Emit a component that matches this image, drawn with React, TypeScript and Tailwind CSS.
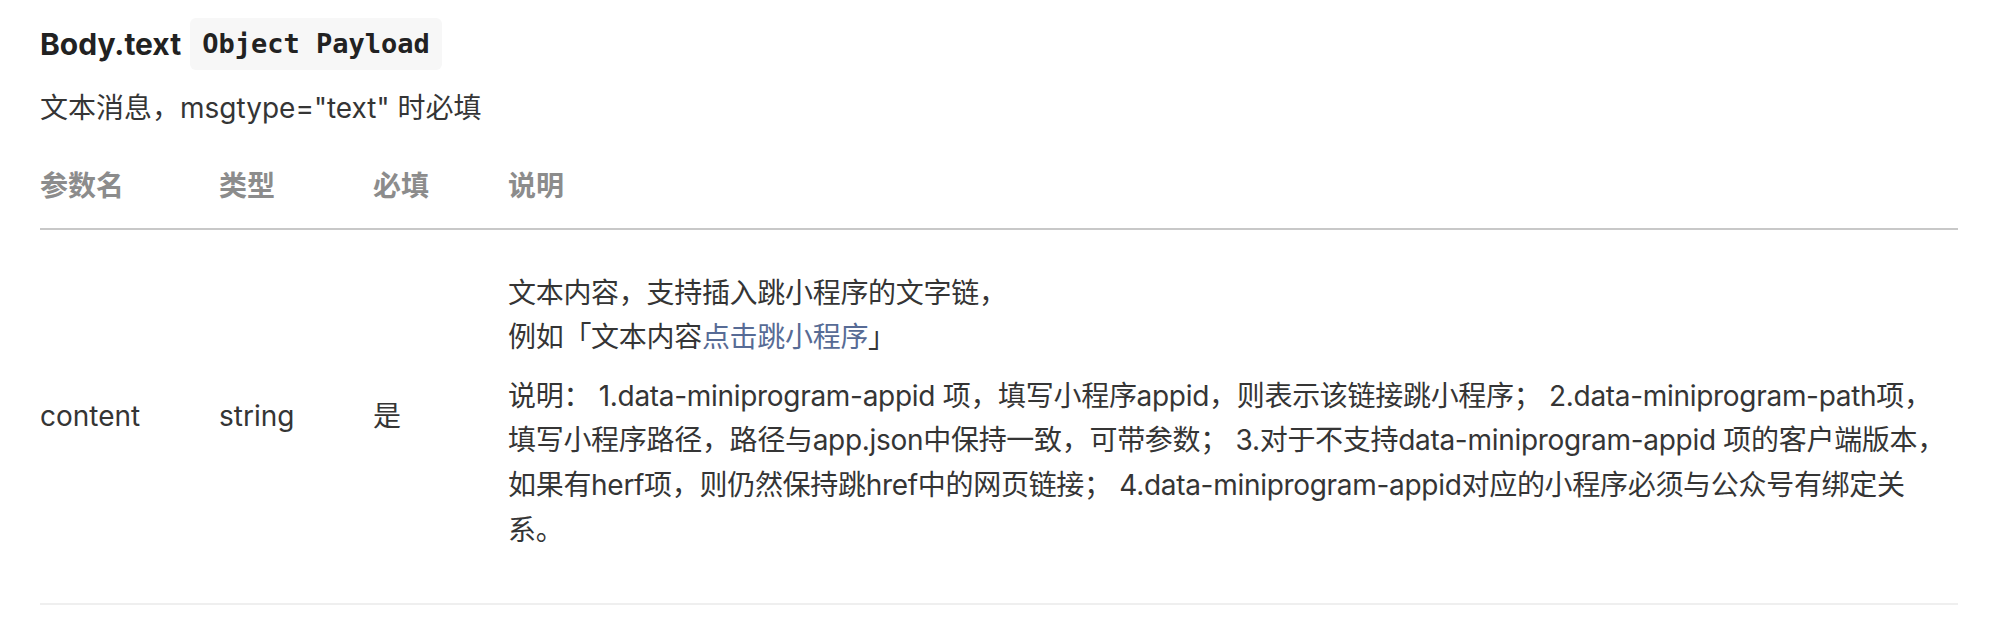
export default function App() {
  return (
    <div className="min-h-screen bg-white px-[40px] pt-[18px] text-[#353535] [font-family:Inter,'Noto_Sans_CJK_SC',sans-serif]">
      <h3 className="flex h-[52px] items-center text-[30px] font-bold text-[#222]">
        <span>Body.text</span>
        <code className="ml-[9px] flex h-[52px] items-center rounded-[6px] bg-[#f7f7f7] px-[12px] text-[27px] font-bold text-[#222] [font-family:'DejaVu_Sans_Mono',monospace]">
          Object Payload
        </code>
      </h3>
      <p className="mt-[16px] text-[28px] leading-[44px]">文本消息，msgtype="text" 时必填</p>

      <table className="mt-[15px] w-full table-fixed border-collapse text-[28px] leading-[44.6px]">
        <colgroup>
          <col className="w-[179px]" />
          <col className="w-[154px]" />
          <col className="w-[135px]" />
          <col />
        </colgroup>
        <thead>
          <tr className="border-b-2 border-[#c8c8c8] text-left text-[#8c8c8c]">
            <th className="pb-[19px] pt-[19px] font-semibold">参数名</th>
            <th className="pb-[19px] pt-[19px] font-semibold">类型</th>
            <th className="pb-[19px] pt-[19px] font-semibold">必填</th>
            <th className="pb-[19px] pt-[19px] font-semibold">说明</th>
          </tr>
        </thead>
        <tbody>
          <tr className="border-b-2 border-[#efefef]">
            <td className="align-middle">content</td>
            <td className="align-middle">string</td>
            <td className="align-middle">是</td>
            <td className="pb-[37px] pt-[41px] align-middle tracking-[-0.3px]">
              <p className="mb-[14px]">
                文本内容，支持插入跳小程序的文字链，
                <br />
                例如「文本内容<a className="text-[#576b95]">点击跳小程序</a>」
              </p>
              <p className="mb-[14px]">
                说明： 1.data-miniprogram-appid 项，填写小程序appid，则表示该链接跳小程序； 2.data-miniprogram-path项，填写小程序路径，路径与app.json中保持一致，可带参数； 3.对于不支持data-miniprogram-appid 项的客户端版本，如果有herf项，则仍然保持跳href中的网页链接； 4.data-miniprogram-appid对应的小程序必须与公众号有绑定关系。
              </p>
            </td>
          </tr>
        </tbody>
      </table>
    </div>
  )
}
